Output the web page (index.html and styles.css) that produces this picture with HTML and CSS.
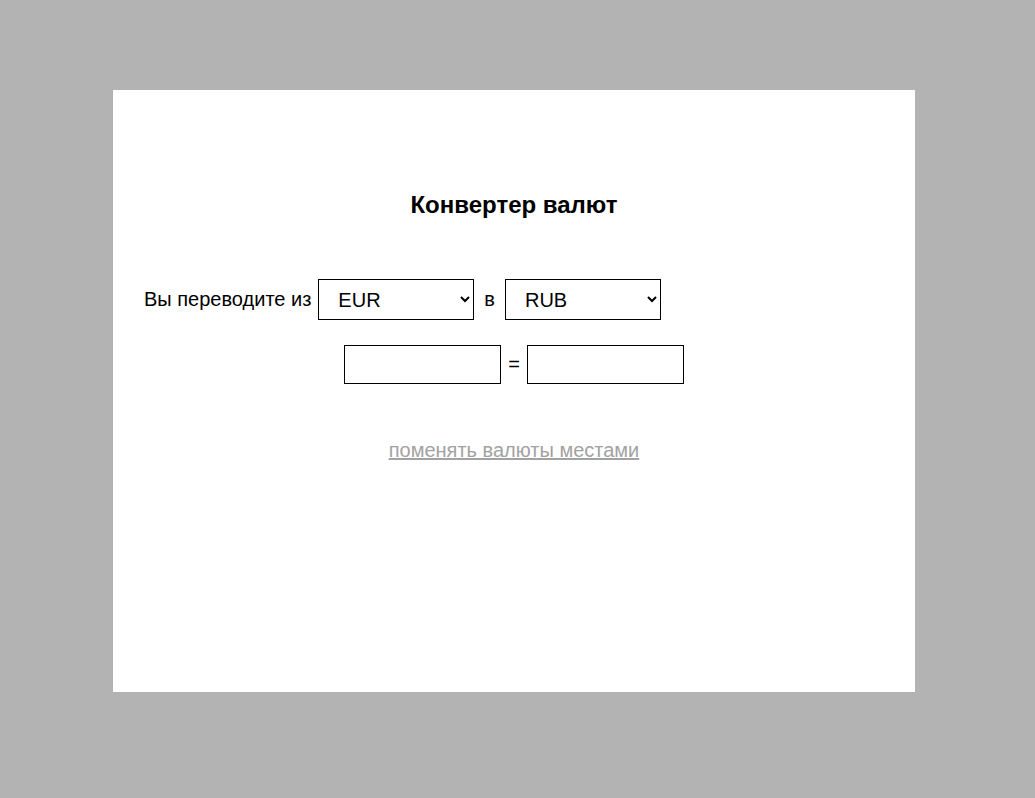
FILE: index.html
```html
<!DOCTYPE html>
<html lang="ru">
<head>
<meta charset="utf-8">
<title>Конвертер валют</title>
<link rel="stylesheet" href="styles.css">
</head>
<body>
<div class="card">
  <h1 class="title">Конвертер валют</h1>
  <div class="row row-select">
    <span class="label label-from">Вы переводите из</span>
    <select class="sel">
      <option>EUR</option>
      <option>RUB</option>
      <option>USD</option>
    </select>
    <span class="label label-to">в</span>
    <select class="sel">
      <option>RUB</option>
      <option>EUR</option>
      <option>USD</option>
    </select>
  </div>
  <div class="row row-input">
    <input class="inp" type="text">
    <span class="label">=</span>
    <input class="inp" type="text">
  </div>
  <div class="swap"><a href="#" class="swap-link">поменять валюты местами</a></div>
</div>
</body>
</html>
```
FILE: styles.css
```css
html, body {
  margin: 0;
  padding: 0;
}
body {
  background: #b3b3b3;
  font-family: "Liberation Sans", Arial, sans-serif;
  height: 798px;
  padding: 90px 0 0 113px;
  box-sizing: border-box;
}
.card {
  width: 802px;
  height: 602px;
  background: #fff;
  box-sizing: border-box;
  padding-top: 101px;
}
.title {
  margin: 0;
  text-align: center;
  font-size: 24px;
  font-weight: bold;
  color: #000;
  line-height: 28px;
}
.row {
  display: flex;
  align-items: center;
  font-size: 20px;
  color: #000;
}
.row-select {
  margin-top: 60px;
  padding-left: 31px;
}
.label-from { margin-right: 7px; }
.label-to { margin: 0 10px; }
.row-input {
  justify-content: center;
  margin-top: 25px;
  gap: 7px;
}
.sel {
  width: 156px;
  height: 41px;
  font-family: "Liberation Sans", Arial, sans-serif;
  font-size: 20px;
  padding: 0 4px 0 15px;
  border: 1px solid #000;
  border-radius: 0;
  background: #fff;
  color: #000;
}
.inp {
  width: 157px;
  height: 39px;
  box-sizing: border-box;
  border: 1px solid #000;
  border-radius: 0;
  font-size: 20px;
  padding: 0 4px;
}
.swap {
  text-align: center;
  margin-top: 55px;
  font-size: 20px;
}
.swap-link {
  color: #a2a2a2;
  text-decoration: underline;
}
```
